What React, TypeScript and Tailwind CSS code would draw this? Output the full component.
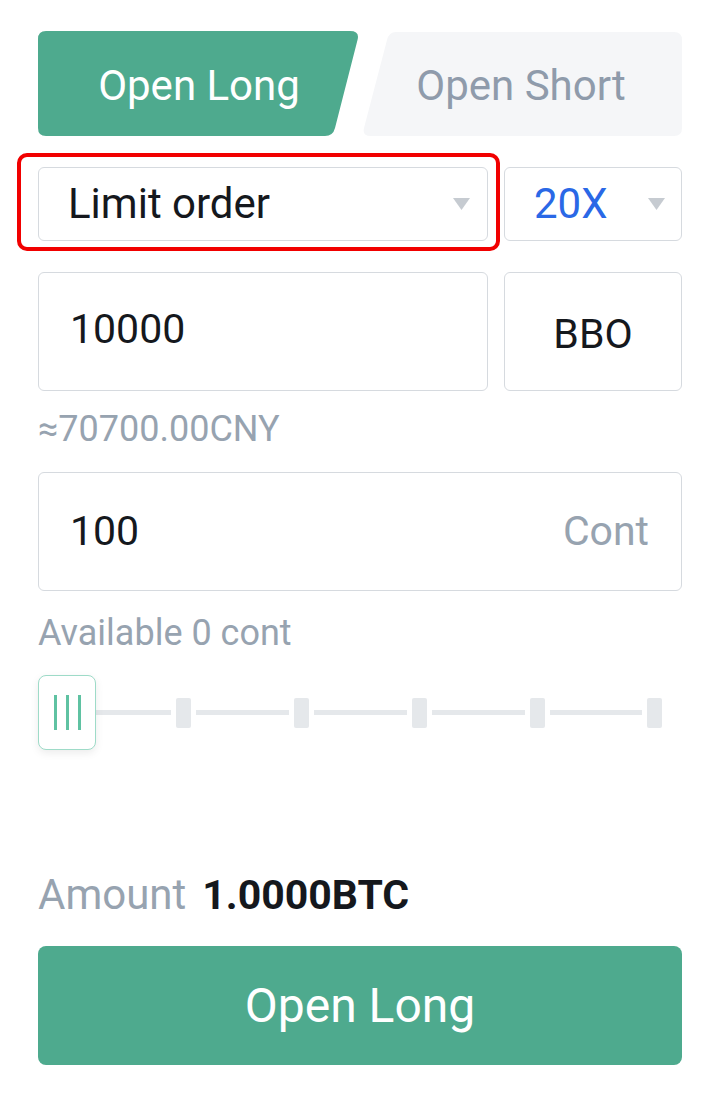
import React from "react";

const Arrow = () => (
  <svg width="19" height="14" viewBox="0 0 19 14" className="shrink-0">
    <path d="M1 1 H18 L9.5 13 Z" fill="#c6cbd1" />
  </svg>
);

export default function App() {
  const ticks = [0, 1, 2, 3, 4];
  return (
    <div
      className="w-[724px] h-[1107px] bg-white text-[#15181d]"
      style={{ fontFamily: "Roboto, 'Liberation Sans', sans-serif" }}
    >
      <div className="ml-[38px] w-[644px] pt-[31px] flex flex-col">
        {/* Tabs */}
        <div className="flex h-[105px]">
          <div className="relative w-[322px] h-full flex items-center justify-center">
            <svg className="absolute inset-0" width="322" height="105" viewBox="0 0 322 105">
              <path
                d="M8,0 H312 Q322,0 319.5,9 L297,97 Q295,105 287,105 H8 Q0,105 0,97 V8 Q0,0 8,0 Z"
                fill="#4eaa8e"
              />
            </svg>
            <span className="relative text-white text-[42px] leading-none pt-[4px]">Open Long</span>
          </div>
          <div className="relative w-[322px] h-full flex items-center justify-center">
            <svg className="absolute inset-0" width="322" height="105" viewBox="0 0 322 105">
              <path
                d="M36,1 H314 Q322,1 322,9 V97 Q322,105 314,105 H11 Q2,105 4,97 L27,9 Q29,1 36,1 Z"
                fill="#f5f6f8"
              />
            </svg>
            <span className="relative text-[#8f9bab] text-[42px] leading-none pt-[4px]">Open Short</span>
          </div>
        </div>

        {/* Selects */}
        <div className="flex gap-[16px] mt-[31px] h-[74px]">
          <div className="relative w-[450px] h-full">
            <div className="absolute -left-[21px] -top-[14px] -right-[12px] -bottom-[10px] border-[4px] border-[#f10000] rounded-[10px] pointer-events-none" />
            <div className="h-full border-[1.5px] border-[#d6dadf] rounded-[6px] flex items-center justify-between pl-[29px] pr-[16px]">
              <span className="text-[42px] leading-none">Limit order</span>
              <Arrow />
            </div>
          </div>
          <div className="flex-1 h-full border-[1.5px] border-[#d6dadf] rounded-[6px] flex items-center justify-between pl-[29px] pr-[15px]">
            <span className="text-[42px] leading-none text-[#2a68e6]">20X</span>
            <Arrow />
          </div>
        </div>

        {/* Price */}
        <div className="flex gap-[16px] mt-[31px] h-[119px]">
          <div className="w-[450px] h-full border-[1.5px] border-[#d6dadf] rounded-[6px] flex items-center pl-[31px]">
            <span className="text-[41px] leading-none pb-[4px]">10000</span>
          </div>
          <div className="flex-1 h-full border-[1.5px] border-[#d6dadf] rounded-[6px] flex items-center justify-center">
            <span className="text-[41px] leading-none pt-[6px]">BBO</span>
          </div>
        </div>

        <div className="mt-[20px] text-[36px] leading-none text-[#97a3b0] h-[34px]">≈70700.00CNY</div>

        {/* Amount input */}
        <div className="mt-[27px] h-[119px] border-[1.5px] border-[#d6dadf] rounded-[6px] flex items-center justify-between pl-[31px] pr-[32px]">
          <span className="text-[41px] leading-none">100</span>
          <span className="text-[41px] leading-none text-[#97a3b0]">Cont</span>
        </div>

        <div className="mt-[24px] text-[36px] leading-none text-[#97a3b0]">Available 0 cont</div>

        {/* Slider */}
        <div className="relative mt-[24px] h-[75px] flex items-center">
          <div className="ml-[35.5px] w-[589px] flex items-center">
            {ticks.map((i) => (
              <div key={i} className="flex items-center flex-1">
                <div className="flex-1 h-[5px] bg-[#e5e8eb] mr-[5px] ml-[5px]" />
                <div className="w-[15px] h-[30px] rounded-[2px] bg-[#e5e8eb]" />
              </div>
            ))}
          </div>
          <div className="absolute left-0 top-0 w-[58px] h-[75px] border-[1.5px] border-[#9edbc8] rounded-[8px] bg-white shadow-[0_3px_8px_rgba(0,0,0,0.08)] flex items-center justify-center gap-[9px]">
            <div className="w-[3px] h-[35px] bg-[#5fc2a2]" />
            <div className="w-[3px] h-[35px] bg-[#5fc2a2]" />
            <div className="w-[3px] h-[35px] bg-[#5fc2a2]" />
          </div>
        </div>

        {/* Amount */}
        <div className="mt-[124px] flex items-baseline gap-[16px] leading-none">
          <span className="text-[42px] text-[#97a3b0]">Amount</span>
          <span className="text-[41px] font-bold">1.0000BTC</span>
        </div>

        <button className="mt-[30px] h-[119px] w-full rounded-[8px] bg-[#4eaa8e] text-white text-[48px] leading-none flex items-center justify-center">
          Open Long
        </button>
      </div>
    </div>
  );
}
